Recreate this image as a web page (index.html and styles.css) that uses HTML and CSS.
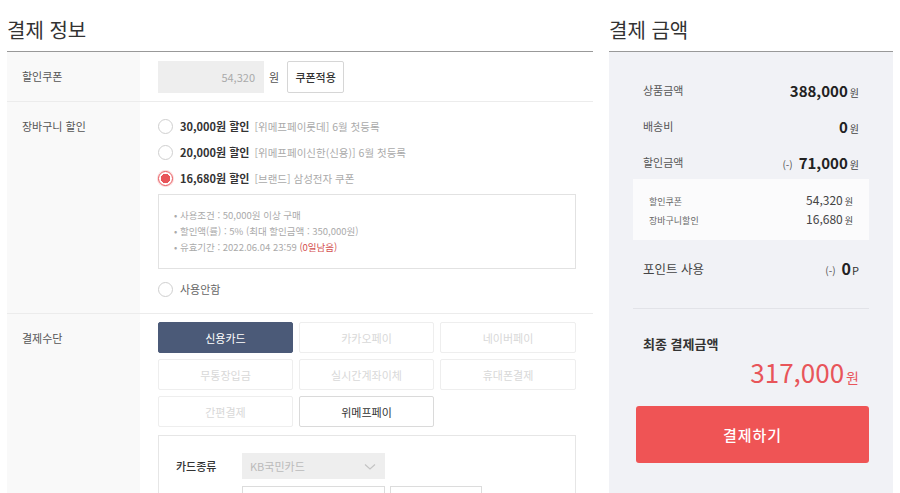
FILE: index.html
```html
<!DOCTYPE html>
<html lang="ko">
<head>
<meta charset="utf-8">
<title>결제</title>
<link rel="stylesheet" href="styles.css">
</head>
<body>
<div class="page">
  <section class="info">
    <h2 class="title">결제 정보</h2>

    <div class="row row-coupon">
      <div class="label">할인쿠폰</div>
      <div class="content coupon">
        <div class="coupon-input">54,320</div>
        <span class="won">원</span>
        <button class="btn-apply">쿠폰적용</button>
      </div>
    </div>

    <div class="row row-cart">
      <div class="label">장바구니 할인</div>
      <div class="content">
        <div class="radio-line"><span class="radio"></span><b>30,000원 할인</b><span class="desc">[위메프페이롯데] 6월 첫등록</span></div>
        <div class="radio-line"><span class="radio"></span><b>20,000원 할인</b><span class="desc">[위메프페이신한(신용)] 6월 첫등록</span></div>
        <div class="radio-line"><span class="radio checked"></span><b>16,680원 할인</b><span class="desc">[브랜드] 삼성전자 쿠폰</span></div>
        <ul class="notice">
          <li>사용조건 : 50,000원 이상 구매</li>
          <li>할인액(률) : 5% (최대 할인금액 : 350,000원)</li>
          <li>유효기간 : 2022.06.04 23:59 <span class="remain">(0일남음)</span></li>
        </ul>
        <div class="radio-line none"><span class="radio"></span><span class="plain">사용안함</span></div>
      </div>
    </div>

    <div class="row row-pay">
      <div class="label">결제수단</div>
      <div class="content">
        <div class="methods">
          <button class="method active">신용카드</button>
          <button class="method off">카카오페이</button>
          <button class="method off">네이버페이</button>
          <button class="method off">무통장입금</button>
          <button class="method off">실시간계좌이체</button>
          <button class="method off">휴대폰결제</button>
          <button class="method off">간편결제</button>
          <button class="method">위메프페이</button>
        </div>
        <div class="card-box">
          <div class="card-row">
            <span class="card-label">카드종류</span>
            <div class="select">KB국민카드
              <svg class="chev" width="12" height="8" viewBox="0 0 12 8"><polyline points="1,1.5 6,6 11,1.5" fill="none" stroke="#c4c4c4" stroke-width="1.2"/></svg>
            </div>
          </div>
          <div class="card-row">
            <span class="card-label"></span>
            <div class="field wide"></div>
            <div class="field narrow"></div>
          </div>
        </div>
      </div>
    </div>
  </section>

  <aside class="summary">
    <h2 class="title">결제 금액</h2>
    <div class="panel">
      <div class="sum-row"><span class="sum-label">상품금액</span><span class="sum-val"><b>388,000</b><small>원</small></span></div>
      <div class="sum-row"><span class="sum-label">배송비</span><span class="sum-val"><b>0</b><small>원</small></span></div>
      <div class="sum-row"><span class="sum-label">할인금액</span><span class="sum-val"><i class="minus">(-)</i><b>71,000</b><small>원</small></span></div>
      <div class="sub-box">
        <div class="sub-row"><span>할인쿠폰</span><span class="sub-val">54,320<small>원</small></span></div>
        <div class="sub-row"><span>장바구니할인</span><span class="sub-val">16,680<small>원</small></span></div>
      </div>
      <div class="sum-row point"><span class="sum-label">포인트 사용</span><span class="sum-val"><i class="minus">(-)</i><b class="pt">0</b><span class="p">P</span></span></div>
      <div class="divider"></div>
      <div class="final-label">최종 결제금액</div>
      <div class="final-val">317,000<small>원</small></div>
      <button class="pay-btn">결제하기</button>
    </div>
  </aside>
</div>
</body>
</html>
```

FILE: styles.css
```css
html, body {
  margin: 0;
  padding: 0;
  overflow: hidden;
  background: #fff;
}
body {
  font-family: "Noto Sans CJK KR", "Noto Sans", sans-serif;
  color: #333;
}
button {
  font-family: inherit;
  cursor: pointer;
}
.page {
  display: flex;
  gap: 16px;
  padding-left: 7px;
}
.info {
  width: 586px;
  flex: none;
}
.summary {
  width: 284px;
  flex: none;
}
.title {
  margin: 0;
  box-sizing: border-box;
  height: 52px;
  padding-top: 17px;
  line-height: 26px;
  font-size: 20px;
  font-weight: 400;
  color: #333;
  border-bottom: 1px solid #999;
}

/* rows */
.row {
  display: flex;
  border-bottom: 1px solid #ececec;
}
.label {
  width: 133px;
  flex: none;
  background: #f9f9f9;
  box-sizing: border-box;
  padding-left: 15px;
  font-size: 11px;
  line-height: 16px;
  color: #555;
}
.content {
  flex: 1;
  padding: 0 17px 0 18px;
}
.row-coupon .label { padding-top: 16px; }
.coupon {
  display: flex;
  align-items: center;
  padding-top: 9px;
  padding-bottom: 8px;
}
.coupon-input {
  width: 106px;
  height: 32px;
  box-sizing: border-box;
  background: #eeeeee;
  text-align: right;
  padding-right: 9px;
  line-height: 32px;
  font-size: 11px;
  color: #aaa;
}
.won {
  font-size: 11px;
  color: #555;
  margin-left: 5px;
}
.btn-apply {
  margin-left: 8px;
  width: 57px;
  height: 32px;
  border: 1px solid #d6d6d6;
  background: #fff;
  border-radius: 2px;
  font-size: 11px;
  font-weight: 500;
  color: #333;
  padding: 0;
}

.row-cart .label { padding-top: 16px; }
.row-cart .content {
  padding-top: 11px;
  padding-bottom: 11px;
}
.radio-line {
  display: flex;
  align-items: center;
  height: 26px;
  font-size: 11px;
}
.radio {
  width: 15px;
  height: 15px;
  box-sizing: border-box;
  border: 1px solid #cfcfcf;
  border-radius: 50%;
  background: #fff;
  margin-right: 7px;
  flex: none;
}
.radio.checked {
  border: 1px solid #e8555a;
  background: radial-gradient(circle, #e8555a 0 4.5px, #fff 5px);
  box-shadow: 0 0 0 1px #fbd9da;
}
.radio-line b {
  font-weight: 700;
  color: #333;
}
.desc {
  margin-left: 5px;
  color: #aaa;
  font-size: 10.5px;
}
.plain {
  color: #666;
}
.notice {
  list-style: none;
  margin: 3px 0 0;
  padding: 12px 15px 14px;
  border: 1px solid #e2e2e2;
  height: 75px;
  box-sizing: border-box;
}
.notice li {
  font-size: 9.5px;
  line-height: 16px;
  color: #aaa;
}
.notice li::before {
  content: "• ";
}
.remain {
  color: #d4504f;
}
.radio-line.none {
  margin-top: 7px;
}

.row-pay {
  border-bottom: none;
}
.row-pay .label {
  padding-top: 16px;
  min-height: 200px;
}
.row-pay .content {
  padding-top: 8px;
}
.methods {
  display: grid;
  grid-template-columns: 135px 135px 136px;
  grid-auto-rows: 31px;
  gap: 6px 6px;
}
.method {
  border: 1px solid #ebebeb;
  background: #fff;
  border-radius: 2px;
  font-size: 11px;
  color: #333;
  padding: 0;
}
.method.off {
  color: #d8d8d8;
  border-color: #eeeeee;
}
.method.active {
  background: #4b5a78;
  border-color: #4b5a78;
  color: #fff;
}
.method:last-child {
  border-color: #dadada;
}
.card-box {
  margin-top: 8px;
  border: 1px solid #e6e6e6;
  padding: 17px 0 0 17px;
  height: 80px;
}
.card-row {
  display: flex;
  align-items: center;
  gap: 5px;
  margin-bottom: 7px;
}
.card-label {
  width: 61px;
  font-size: 11px;
  font-weight: 500;
  color: #333;
}
.select {
  position: relative;
  width: 143px;
  height: 26px;
  box-sizing: border-box;
  background: #eeeeee;
  padding-left: 8px;
  line-height: 26px;
  font-size: 11px;
  color: #bbb;
}
.chev {
  position: absolute;
  right: 9px;
  top: 10px;
}
.field {
  height: 26px;
  box-sizing: border-box;
  border: 1px solid #dcdcdc;
  background: #fff;
}
.field.wide { width: 143px; }
.field.narrow { width: 92px; }

/* summary */
.panel {
  background: #f1f2f6;
  padding: 20px 24px 0;
  height: 460px;
}
.sum-row {
  display: flex;
  justify-content: space-between;
  align-items: center;
  height: 36px;
  padding: 0 10px;
}
.sum-label {
  font-size: 11px;
  color: #555;
}
.sum-val {
  display: flex;
  align-items: baseline;
}
.sum-val b {
  font-size: 15px;
  font-weight: 700;
  color: #222;
}
.sum-val small {
  font-size: 10px;
  color: #444;
  margin-left: 2px;
}
.minus {
  font-style: normal;
  font-size: 10px;
  color: #555;
  margin-right: 6px;
}
.sub-box {
  background: #fbfbfc;
  padding: 11px 16px 12px;
  margin-top: -1px;
}
.sub-row {
  display: flex;
  justify-content: space-between;
  align-items: baseline;
  height: 19px;
  line-height: 19px;
  font-size: 9px;
  color: #666;
}
.sub-val {
  font-size: 12px;
  color: #444;
}
.sub-val small {
  font-size: 9px;
  margin-left: 2px;
}
.point {
  margin-top: 10px;
}
.point .sum-label {
  font-size: 12.5px;
  color: #444;
}
.sum-val b.pt {
  font-size: 16px;
}
.p {
  font-size: 11px;
  color: #333;
  margin-left: 1px;
}
.divider {
  margin-top: 22px;
  height: 1px;
  background: #e2e3e8;
}
.final-label {
  padding: 26px 10px 0;
  font-size: 13px;
  font-weight: 700;
  line-height: 18px;
  color: #333;
}
.final-val {
  margin-top: 4px;
  padding-right: 10px;
  text-align: right;
  font-size: 26px;
  line-height: 30px;
  color: #e8555a;
}
.final-val small {
  font-size: 14px;
  margin-left: 2px;
}
.pay-btn {
  display: block;
  margin-top: 14px;
  margin-left: 3px;
  width: calc(100% - 3px);
  height: 57px;
  border: none;
  border-radius: 3px;
  background: #ef5455;
  color: #fff;
  font-size: 15px;
  font-weight: 500;
  letter-spacing: 1px;
}
```
